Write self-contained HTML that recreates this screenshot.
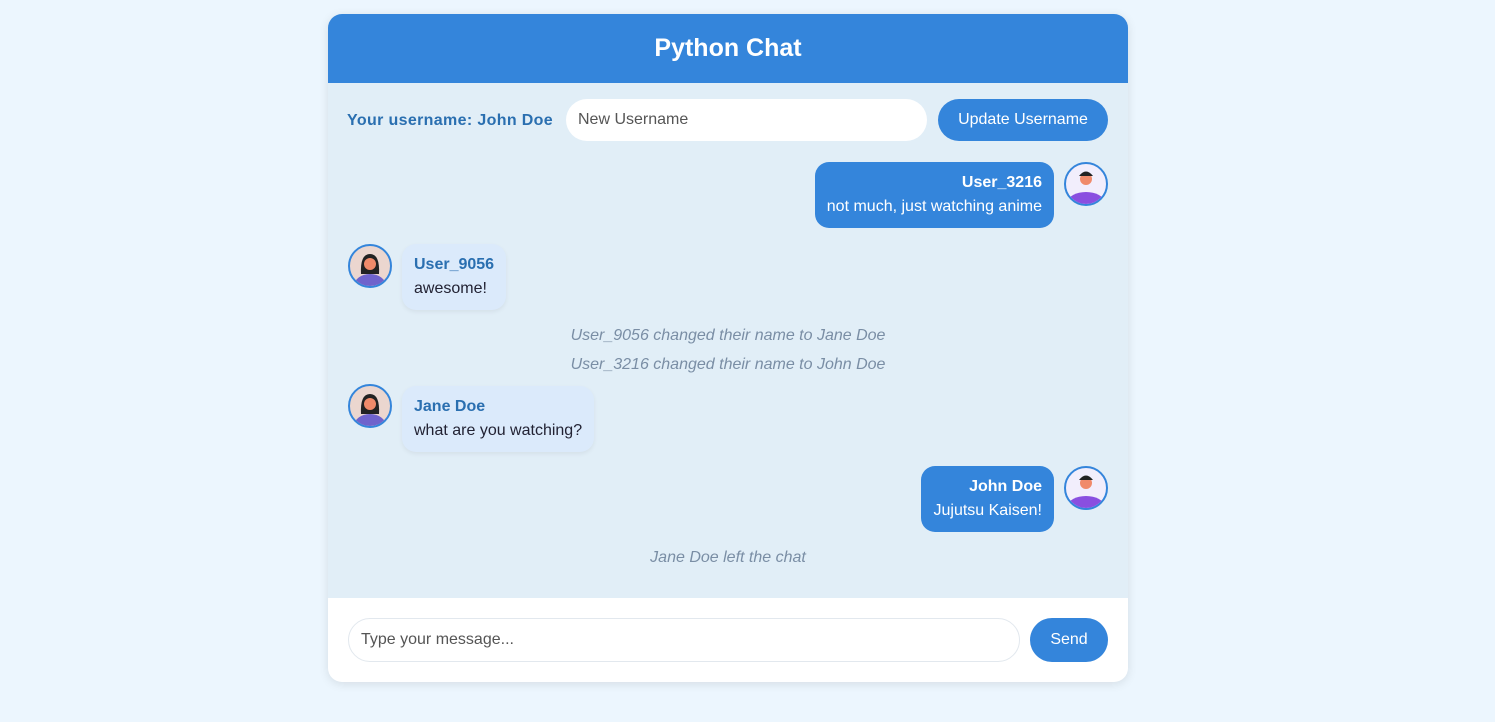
<!DOCTYPE html>
<html><head><style>
*{box-sizing:border-box;margin:0;padding:0}
body{width:1495px;height:722px;background:#ecf6fe;font-family:"Liberation Sans",sans-serif;position:relative;overflow:hidden}
.c{position:absolute;left:328px;top:14px;width:800px;height:668px;border-radius:14px;overflow:hidden;background:#e1eef7;box-shadow:0 2px 10px rgba(0,0,0,.1)}
.h{height:69px;background:#3485db;color:#fff;font-weight:bold;font-size:25px;text-align:center;line-height:69px}
.a{position:absolute}
.lbl{left:19px;top:98px;color:#2a6fb0;font-weight:bold;font-size:16px;letter-spacing:0.35px}
.in{background:#fff;border-radius:22px;font-size:16px;color:#555;padding-left:12px;display:flex;align-items:center}
.btn{background:#3485db;color:#fff;border-radius:22px;font-size:16px;display:flex;align-items:center;justify-content:center}
.bub{border-radius:14px;padding:9px 12px;font-size:16px;line-height:24px}
.me{background:#3485db;color:#fff;text-align:right}
.ot{background:#dbeafb;color:#223;box-shadow:0 2px 5px rgba(0,0,0,.06)}
.ot b{color:#2a6fb0}
.av{width:44px;height:44px;border-radius:50%;border:2px solid #3485db;overflow:hidden;background:#f2eefc}
.sys{left:0;width:800px;text-align:center;font-style:italic;color:#7a8ea5;font-size:16px}
.f{position:absolute;left:0;top:584px;width:800px;height:84px;background:#fff}
</style></head><body>
<div class="c">
<div class="h">Python Chat</div>
<div class="a lbl" style="top:98px">Your username: John Doe</div>
<div class="a in" style="left:238px;top:85px;width:361px;height:42px">New Username</div>
<div class="a btn" style="left:610px;top:85px;width:170px;height:42px">Update Username</div>

<div class="a bub me" style="right:74px;top:148px"><b>User_3216</b><br>not much, just watching anime</div>
<div class="a av" style="left:736px;top:148px"><svg width="40" height="40"><circle cx="20" cy="15" r="6" fill="#f08a6a"/><path d="M13 12q7-9 14 0" fill="#222"/><ellipse cx="20" cy="38" rx="18" ry="10" fill="#8a4fe0"/></svg></div>

<div class="a av" style="left:20px;top:230px;background:#ebd6cf"><svg width="40" height="40"><path d="M11 28q-1-20 9-20t9 20z" fill="#222"/><circle cx="20" cy="18" r="6" fill="#f08a6a"/><ellipse cx="20" cy="40" rx="16" ry="12" fill="#6f63cc"/></svg></div>
<div class="a bub ot" style="left:74px;top:230px"><b>User_9056</b><br>awesome!</div>

<div class="a sys" style="top:313px">User_9056 changed their name to Jane Doe</div>
<div class="a sys" style="top:342px">User_3216 changed their name to John Doe</div>

<div class="a av" style="left:20px;top:370px;background:#ebd6cf"><svg width="40" height="40"><path d="M11 28q-1-20 9-20t9 20z" fill="#222"/><circle cx="20" cy="18" r="6" fill="#f08a6a"/><ellipse cx="20" cy="40" rx="16" ry="12" fill="#6f63cc"/></svg></div>
<div class="a bub ot" style="left:74px;top:372px"><b>Jane Doe</b><br>what are you watching?</div>

<div class="a bub me" style="right:74px;top:452px"><b>John Doe</b><br>Jujutsu Kaisen!</div>
<div class="a av" style="left:736px;top:452px"><svg width="40" height="40"><circle cx="20" cy="15" r="6" fill="#f08a6a"/><path d="M13 12q7-9 14 0" fill="#222"/><ellipse cx="20" cy="38" rx="18" ry="10" fill="#8a4fe0"/></svg></div>

<div class="a sys" style="top:535px">Jane Doe left the chat</div>

<div class="f">
<div class="a in" style="left:20px;top:20px;width:672px;height:44px;border:1px solid #e2e8ee">Type your message...</div>
<div class="a btn" style="left:702px;top:20px;width:78px;height:44px">Send</div>
</div>
</div>
</body></html>
